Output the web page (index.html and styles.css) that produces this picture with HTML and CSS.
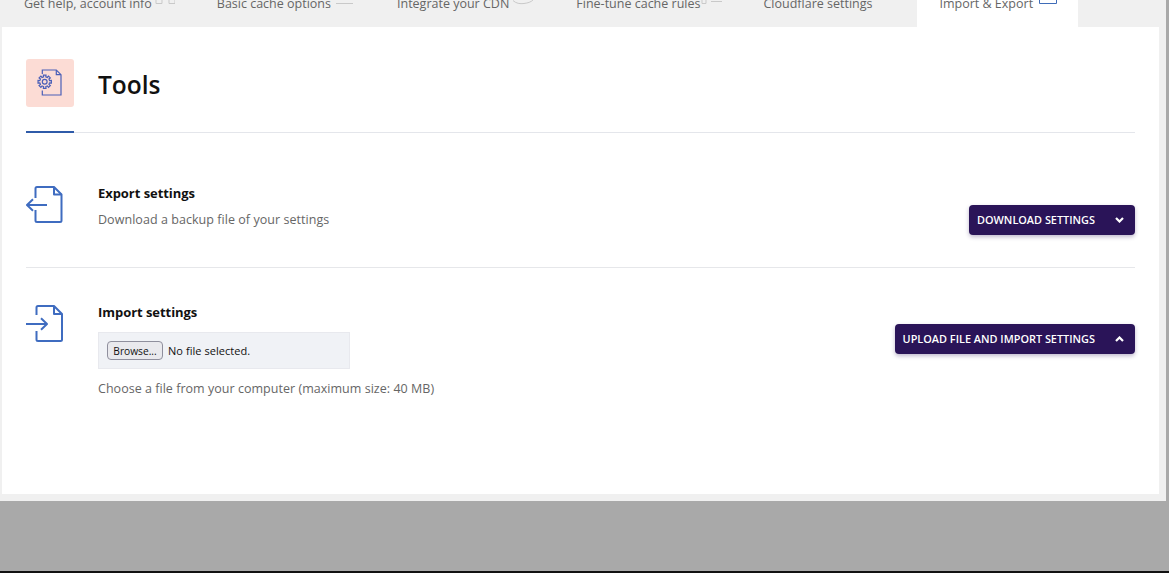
FILE: index.html
```html
<!DOCTYPE html>
<html lang="en">
<head>
<meta charset="utf-8">
<title>Tools</title>
<link rel="stylesheet" href="styles.css">
</head>
<body>
<div class="shell">
  <nav class="tabs">
    <a class="tab"><span class="tab-label">Get help, account info</span>
      <svg class="tab-icon tab-icon-a" viewBox="0 0 20 5"><path d="M1 0v3.500h6V0M14 0v3.500h6V0"/></svg></a>
    <a class="tab"><span class="tab-label">Basic cache options</span>
      <svg class="tab-icon tab-icon-b" viewBox="0 0 17 5"><path d="M0 3.500h17"/></svg></a>
    <a class="tab"><span class="tab-label">Integrate your CDN</span>
      <svg class="tab-icon tab-icon-c" viewBox="0 0 22 5"><path d="M1 .5c3 3 7 3.500 11 3s7-1.500 9-3.500"/></svg></a>
    <a class="tab"><span class="tab-label">Fine-tune cache rules</span>
      <svg class="tab-icon tab-icon-d" viewBox="0 0 21 5"><path d="M1 0v3.500h4V0M10 1.500h11"/></svg></a>
    <a class="tab"><span class="tab-label">Cloudflare settings</span>
      <span class="tab-icon tab-icon-e"></span></a>
    <a class="tab tab-active"><span class="tab-label">Import &amp; Export</span>
      <svg class="tab-icon tab-icon-f" viewBox="0 0 18 5"><path d="M.5 0v3.500h17V0"/></svg></a>
  </nav>
  <main class="card">
    <header class="head">
      <div class="head-icon">
        <svg width="26" height="28" viewBox="0 0 26 28" class="gear-file">
          <path d="M5.300 5V1h14l4.700 4.700V26H5.300v-4.500"/>
          <path d="M19.300 1v4.700H24"/>
          <g transform="translate(7.700 12.700)">
            <circle r="2.400"/>
            <path d="M-1.120-4.870-1.300-6.670H1.300L1.120-4.870 2.650-4.240 3.800-5.640 5.640-3.800 4.240-2.650 4.870-1.120 6.670-1.300V1.300L4.870 1.120 4.240 2.650 5.640 3.800 3.800 5.640 2.650 4.240 1.120 4.870 1.300 6.670H-1.300L-1.120 4.870-2.650 4.240-3.800 5.640-5.640 3.800-4.240 2.650-4.870 1.120-6.670 1.300V-1.300L-4.870-1.120-4.240-2.650-5.640-3.800-3.800-5.640-2.650-4.240Z"/>
          </g>
        </svg>
      </div>
      <h1 class="title">Tools</h1>
    </header>

    <section class="row row-export">
      <svg class="row-icon" width="38" height="38" viewBox="0 0 38 38">
        <path d="M9.500 12V2.500a1.500 1.500 0 0 1 1.500-1.500h17l7.500 7.500V34.500a1.500 1.500 0 0 1-1.500 1.500H11a1.500 1.500 0 0 1-1.500-1.500V24"/>
        <path d="M28 1v7.500h7.500"/>
        <path d="M21 19H1M7 13.300 1 19l6 5.700"/>
      </svg>
      <div class="row-body">
        <h2 class="row-title">Export settings</h2>
        <p class="row-desc">Download a backup file of your settings</p>
      </div>
      <button class="action" type="button"><span>Download settings</span>
        <svg width="9" height="6" viewBox="0 0 9 6"><path d="M1 1l3.500 3.500L8 1"/></svg></button>
    </section>

    <section class="row row-import">
      <svg class="row-icon" width="38" height="38" viewBox="0 0 38 38">
        <path d="M10.500 10V2.500A1.500 1.500 0 0 1 12 1h16l8 8v25.500a1.500 1.500 0 0 1-1.500 1.500H12a1.500 1.500 0 0 1-1.500-1.500V26"/>
        <path d="M28 1v8h8"/>
        <path d="M0 19h21M15 13.300l6 5.700-6 5.700"/>
      </svg>
      <div class="row-body">
        <h2 class="row-title">Import settings</h2>
        <div class="file-box">
          <button class="browse" type="button">Browse...</button>
          <span class="file-name">No file selected.</span>
        </div>
        <p class="row-desc row-note">Choose a file from your computer (maximum size: 40 MB)</p>
      </div>
      <button class="action" type="button"><span>Upload file and import settings</span>
        <svg width="9" height="6" viewBox="0 0 9 6"><path d="M1 5l3.500-3.500L8 5"/></svg></button>
    </section>
  </main>
</div>
</body>
</html>
```
FILE: styles.css
```css
* { box-sizing: border-box; }
html, body { margin: 0; height: 100%; }
body {
  height: 573px;
  overflow: hidden;
  background: #a9a9a9;
  border-bottom: 2px solid #111;
  font-family: "Open Sans", "Noto Sans", sans-serif;
}
.shell {
  width: 1166px;
  height: 501px;
  padding: 0 7px 7px 2px;
  background: #f0f0f0;
  display: flex;
  flex-direction: column;
}
.tabs {
  display: flex;
  height: 27px;
  flex: none;
  overflow: hidden;
}
.tab {
  display: flex;
  align-items: flex-start;
  height: 27px;
  padding: 0 20px 0 22px;
  color: #666;
  font-size: 12.500px;
  line-height: 20px;
}
.tab-active { background: #fff; }
.tab-label { margin-top: -6px; white-space: nowrap; }
.tab-icon {
  flex: none;
  height: 5px;
  fill: none;
  stroke: #c9c9c9;
  stroke-width: 1;
}
.tab-icon-a { width: 20px; margin-left: 3px; }
.tab-icon-b { width: 17px; margin-left: 5px; margin-right: 2px; }
.tab-icon-c { width: 22px; margin-left: 3px; }
.tab-icon-d { width: 21px; margin-left: 1px; margin-right: -1px; }
.tab-icon-e { width: 25px; }
.tab-icon-f { width: 18px; margin-left: 6px; margin-right: 1px; stroke: #3f6cb8; }
.card {
  flex: 1;
  background: #fff;
  padding: 32px 24px 0;
}
.head {
  display: flex;
  align-items: center;
  height: 74px;
  padding-bottom: 26px;
  border-bottom: 1px solid #e4e6eb;
  position: relative;
}
.head::after {
  content: "";
  position: absolute;
  left: 0;
  bottom: -1px;
  width: 48px;
  height: 2px;
  background: #2f5ba9;
}
.head-icon {
  flex: none;
  width: 48px;
  height: 48px;
  border-radius: 3px;
  background: #fcdcd5;
  display: flex;
  align-items: center;
  justify-content: center;
}
.gear-file {
  fill: none;
  stroke: #4a5fb8;
  stroke-width: 1.200;
}
.title {
  margin: 4px 0 0 24px;
  font-size: 24.500px;
  font-weight: 600;
  color: #111;
  line-height: 34px;
}
.row {
  display: flex;
  align-items: flex-start;
}
.row-export {
  height: 135px;
  padding-top: 52px;
  border-bottom: 1px solid #e6e7ea;
}
.row-import { padding-top: 36px; }
.row-icon {
  flex: none;
  margin-top: 1px;
  fill: none;
  stroke: #3f6cc0;
  stroke-width: 2;
  stroke-linejoin: round;
}
.row-body {
  flex: 1;
  margin-left: 34px;
}
.row-title {
  margin: 0;
  font-size: 13px;
  font-weight: 700;
  line-height: 16px;
  letter-spacing: -.05px;
  color: #111;
}
.row-desc {
  margin: 9px 0 0;
  font-size: 12.500px;
  line-height: 20px;
  letter-spacing: .05px;
  color: #666;
}
.file-box {
  display: flex;
  align-items: center;
  width: 252px;
  height: 37px;
  margin-top: 12px;
  padding-left: 8px;
  background: #f0f2f6;
  border: 1px solid #e8e9ee;
}
.browse {
  width: 56px;
  height: 19px;
  padding: 0;
  border: 1px solid #8f8f9d;
  border-radius: 4px;
  background: #e9e9ed;
  color: #111;
  font-family: "Open Sans", sans-serif;
  font-size: 10.200px;
  line-height: 16px;
}
.file-name {
  margin-left: 5px;
  font-family: "Open Sans", sans-serif;
  font-size: 11px;
  letter-spacing: .05px;
  color: #111;
}
.row-note { margin-top: 10px; letter-spacing: .03px; }
.action {
  flex: none;
  display: flex;
  align-items: center;
  height: 30px;
  margin-top: 20px;
  padding: 0 11px 2px 8px;
  border: 0;
  border-radius: 4px;
  background: #2a1458;
  box-shadow: 0 2px 4px rgba(42, 20, 88, .3);
  color: #fff;
  font-family: "Open Sans", sans-serif;
  font-size: 10.900px;
  font-weight: 600;
  text-transform: uppercase;
  white-space: nowrap;
}
.action svg {
  margin: 2px 0 0 20px;
  fill: none;
  stroke: #fff;
  stroke-width: 2.200;
}
```
